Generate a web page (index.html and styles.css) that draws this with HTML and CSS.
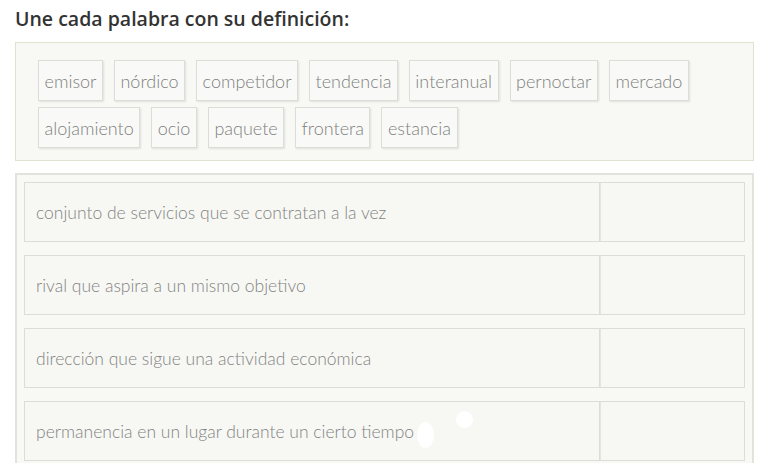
FILE: index.html
```html
<!DOCTYPE html>
<html lang="es">
<head>
<meta charset="utf-8">
<title>Une cada palabra con su definición</title>
<link rel="stylesheet" href="styles.css">
</head>
<body>
<div class="page">
  <h1 class="title">Une cada palabra con su definición:</h1>
  <div class="bank">
    <span class="chip">emisor</span>
    <span class="chip">nórdico</span>
    <span class="chip">competidor</span>
    <span class="chip">tendencia</span>
    <span class="chip">interanual</span>
    <span class="chip">pernoctar</span>
    <span class="chip">mercado</span>
    <span class="chip">alojamiento</span>
    <span class="chip">ocio</span>
    <span class="chip">paquete</span>
    <span class="chip">frontera</span>
    <span class="chip">estancia</span>
  </div>
  <div class="defs">
    <div class="row"><div class="def">conjunto de servicios que se contratan a la vez</div><div class="slot"></div></div>
    <div class="row"><div class="def">rival que aspira a un mismo objetivo</div><div class="slot"></div></div>
    <div class="row"><div class="def">dirección que sigue una actividad económica</div><div class="slot"></div></div>
    <div class="row"><div class="def">permanencia en un lugar durante un cierto tiempo</div><div class="slot"></div></div>
    <span class="dot dot-a"></span>
    <span class="dot dot-b"></span>
  </div>
</div>
</body>
</html>
```
FILE: styles.css
```css
html, body {
  margin: 0;
  padding: 0;
  background: #ffffff;
}
body {
  width: 768px;
  height: 463px;
  overflow: hidden;
}
.page {
  padding: 0 14px 0 15px;
}
.title {
  margin: 0;
  padding-top: 6px;
  height: 42px;
  box-sizing: border-box;
  font-family: "Open Sans", "Liberation Sans", sans-serif;
  font-weight: 600;
  font-size: 19.5px;
  line-height: 26px;
  color: #333333;
}
.bank {
  box-sizing: border-box;
  width: 739px;
  height: 119px;
  background: #f8f9f4;
  border: 1px solid #dfe2cf;
  padding: 17px 20px 0 22px;
  display: flex;
  flex-wrap: wrap;
  align-content: flex-start;
  column-gap: 11px;
  row-gap: 6px;
}
.chip {
  box-sizing: border-box;
  height: 41px;
  display: flex;
  align-items: center;
  padding: 0 5.5px;
  background: #f9faf7;
  border: 1px solid #dcdcd8;
  box-shadow: 1px 1px 2px rgba(0, 0, 0, 0.10);
  font-family: Lato, "Open Sans", sans-serif;
  font-weight: 300;
  font-size: 18px;
  color: #7f7f7f;
}
.defs {
  position: relative;
  box-sizing: border-box;
  width: 739px;
  height: 300px;
  margin-top: 12px;
  background: #f8f9f4;
  border: 2px solid #e2e3dc;
  border-bottom: none;
  padding: 7px 7px 0 7px;
  display: flex;
  flex-direction: column;
  gap: 13px;
}
.row {
  box-sizing: border-box;
  display: flex;
  height: 60px;
  width: 721px;
  border: 1px solid #dcddd6;
  background: #f7f8f4;
}
.def {
  flex: 1;
  display: flex;
  align-items: center;
  padding-left: 11px;
  font-family: Lato, "Open Sans", sans-serif;
  font-weight: 300;
  font-size: 17.5px;
  color: #838383;
  border-right: 1px solid #dcddd6;
}
.slot {
  width: 143px;
  border-left: 1px solid #e4e5df;
}
.dot {
  position: absolute;
  background: #ffffff;
  border-radius: 50%;
}
.dot-a {
  left: 400px;
  top: 247px;
  width: 17px;
  height: 26px;
}
.dot-b {
  left: 439px;
  top: 236px;
  width: 17px;
  height: 17px;
}
```
